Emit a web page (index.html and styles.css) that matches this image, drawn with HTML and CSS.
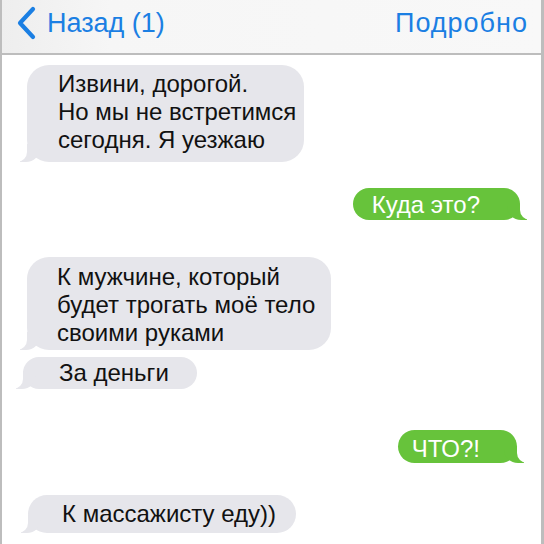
FILE: index.html
```html
<html>
<head>
<meta charset="utf-8">
<link rel="stylesheet" href="styles.css">
</head>
<body>

<div class="phone">

    <!-- top bar -->
    <div class="nav">
        <div class="back">
            <svg class="chev" width="20" height="34" viewBox="0 0 20 34">
                <path d="M17 3 L4 17 L17 31" fill="none" stroke="#1b7fe3" stroke-width="4.2" stroke-linecap="round" stroke-linejoin="round"/>
            </svg>
            <span>Назад (1)</span>
        </div>
        <div class="more">Подробно</div>
    </div>

    <!-- messages -->
    <div class="thread">
        <div class="row in m1">
            <div class="bubble gray b1">Извини, дорогой.<br>Но мы не встретимся<br>сегодня. Я уезжаю</div>
        </div>
        <div class="row out m2">
            <div class="bubble green b2">Куда это?</div>
        </div>
        <div class="row in m3">
            <div class="bubble gray b3">К мужчине, который<br>будет трогать моё тело<br>своими руками</div>
        </div>
        <div class="row in m4">
            <div class="bubble gray b4">За деньги</div>
        </div>
        <div class="row out m5">
            <div class="bubble green b5">ЧТО?!</div>
        </div>
        <div class="row in m6">
            <div class="bubble gray b6">К массажисту еду))</div>
        </div>
    </div>

</div>

</body>
</html>
```

FILE: styles.css
```css
html, body {
    margin: 0;
    padding: 0;
    background: #fff;
}
body {
    font-family: "Liberation Sans", Arial, sans-serif;
}
.phone {
    width: 544px;
    height: 544px;
    box-sizing: border-box;
    border-left: 2px solid #bdbdbd;
    border-right: 3px solid #bdbdbd;
    overflow: hidden;
    background: #fff;
}

/* top bar */
.nav {
    height: 55px;
    box-sizing: border-box;
    background: linear-gradient(90deg, #eeeeee 0%, #f6f6f6 20%, #f8f8f8 100%);
    border-bottom: 2px solid #bdbdbd;
    display: flex;
    justify-content: space-between;
    align-items: center;
    padding: 0 13px 7px 14px;
    color: #1b7fe3;
    font-size: 27px;
}
.back {
    display: flex;
    align-items: center;
    gap: 11px;
}
.more {
    letter-spacing: 1px;
}

/* message list */
.thread {
    display: flex;
    flex-direction: column;
    padding: 0 21px 0 25px;
}
.row {
    display: flex;
}
.row.out {
    justify-content: flex-end;
}
.m1 { margin-top: 10px; }
.m2 { margin-top: 26px; }
.m3 { margin-top: 37px; }
.m4 { margin-top: 7px; margin-left: -4px; }
.m5 { margin-top: 41px; margin-right: 3px; }
.m6 { margin-top: 32px; margin-left: 1px; }

.bubble {
    position: relative;
    font-size: 24px;
    line-height: 28px;
    border-radius: 18px;
}
.b1 { padding: 5px 8px 8px 31px; border-radius: 22px; }
.b2 { padding: 3px 40px 1px 19px; }
.b3 { padding: 6px 16px 3px 30px; border-radius: 22px; }
.b4 { padding: 2px 28px 2px 36px; }
.b5 { padding: 5px 37px 0 14px; }
.b6 { padding: 5px 20px 5px 34px; border-radius: 19px; }

.gray {
    background: #e6e6eb;
    color: #111;
}
.green {
    background: #67c33b;
    color: #fff;
}

/* bubble tails */
.gray::before {
    content: "";
    position: absolute;
    bottom: 0;
    left: -7px;
    width: 20px;
    height: 18px;
    background: #e6e6eb;
    border-bottom-right-radius: 14px;
}
.gray::after {
    content: "";
    position: absolute;
    bottom: 0;
    left: -10px;
    width: 10px;
    height: 18px;
    background: #fff;
    border-bottom-right-radius: 10px;
}
.green::before {
    content: "";
    position: absolute;
    bottom: 0;
    right: -7px;
    width: 20px;
    height: 16px;
    background: #67c33b;
    border-bottom-left-radius: 14px;
}
.green::after {
    content: "";
    position: absolute;
    bottom: 0;
    right: -10px;
    width: 10px;
    height: 16px;
    background: #fff;
    border-bottom-left-radius: 10px;
}
```
